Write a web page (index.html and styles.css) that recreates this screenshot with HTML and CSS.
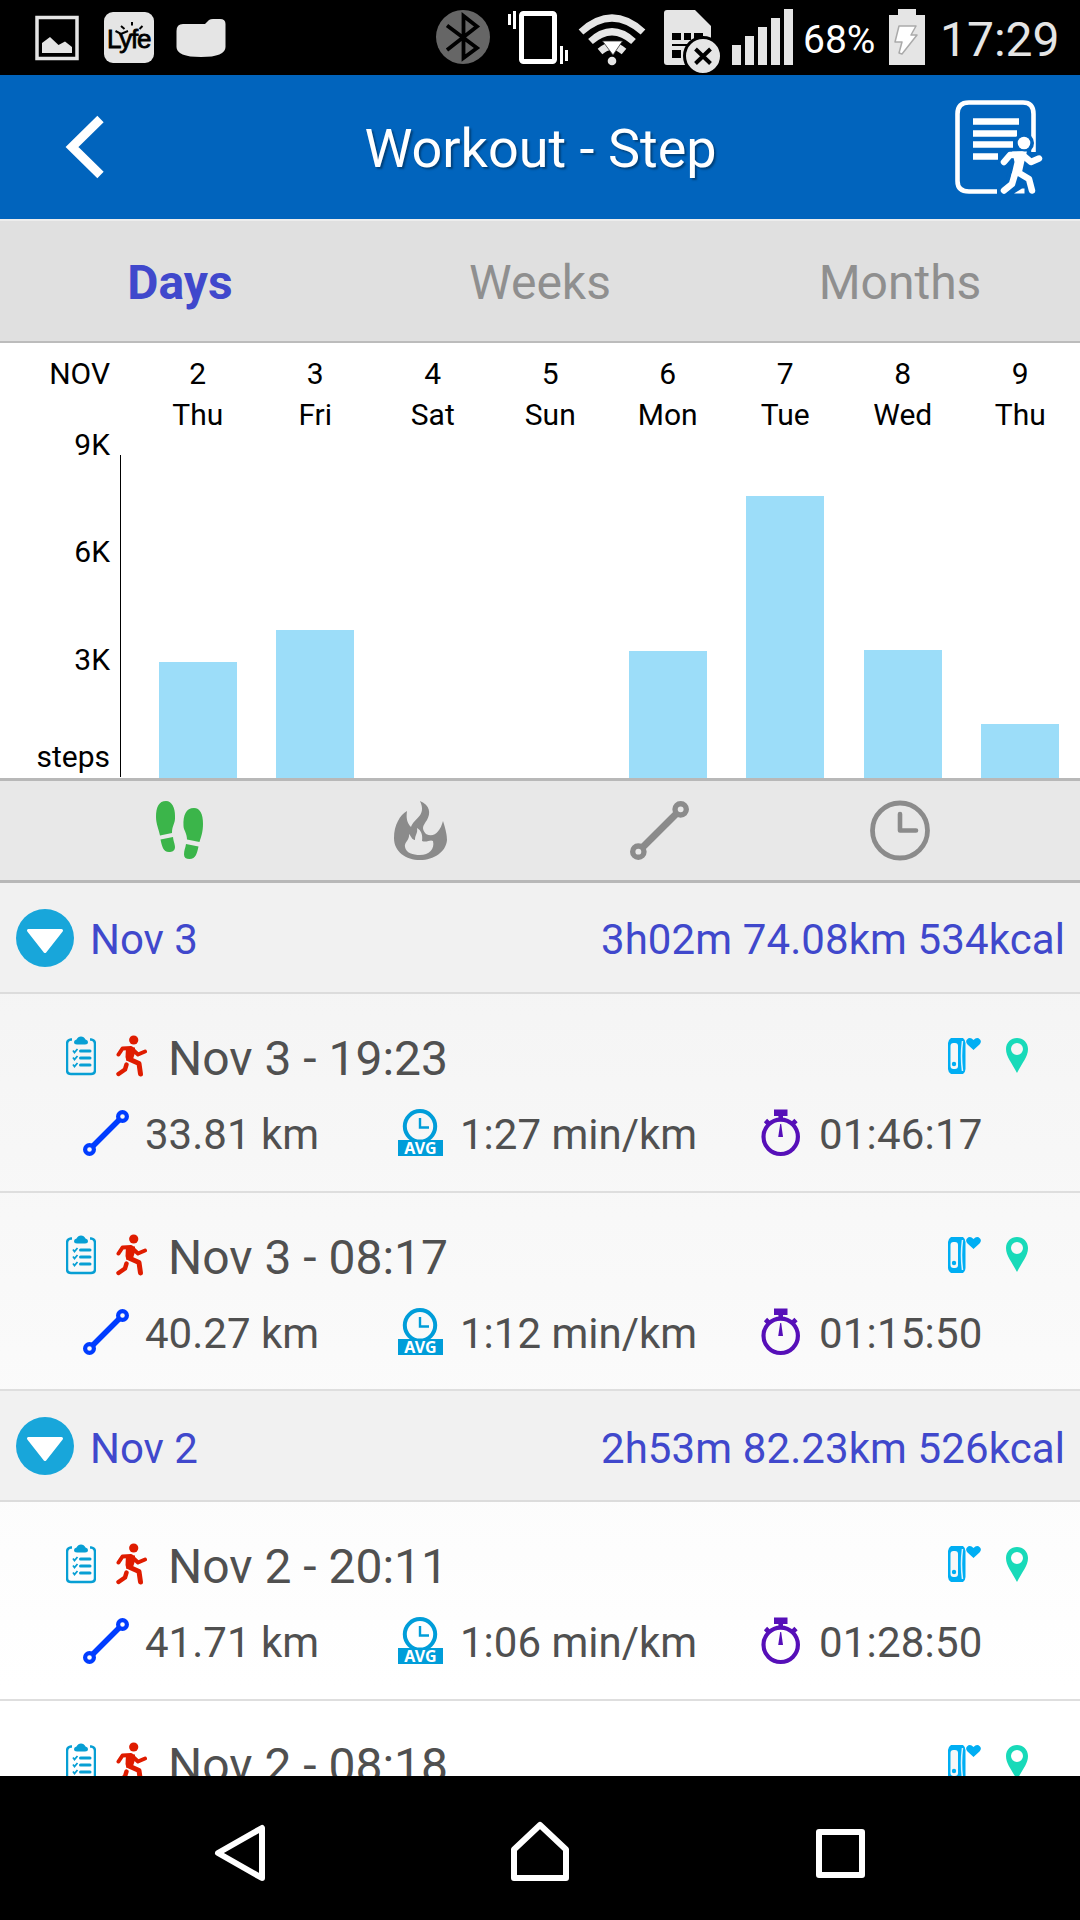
FILE: index.html
```html
<!DOCTYPE html>
<html lang="en">
<head>
    <meta charset="UTF-8">
    <meta name="viewport" content="width=device-width, initial-scale=1.0">
    <title>Workout - Step</title>
    <link rel="stylesheet" href="styles.css">
</head>
<body>
    <!-- shared icons -->
    <svg class="sprite">
        <symbol id="arrow" viewBox="0 0 58 58">
            <circle cx="29" cy="29" r="29" fill="#18a6da"/>
            <path d="M12.500 21.500H45.500L29 42.500Z" fill="#fff" stroke="#fff" stroke-width="3" stroke-linejoin="round"/>
        </symbol>
        <symbol id="clipboard" viewBox="0 0 30 40">
            <path d="M6 3.500H5Q1 4 1 8V34Q1 38 5 38H25Q29 38 29 34V8Q29 4 25 3.500H24" fill="none" stroke="#079fd4" stroke-width="2.500"/>
            <path d="M8 6Q8 4 10.500 3.500Q12 .5 15 .5T19.500 3.500Q22 4 22 6Q22 8.500 19 8.500H11Q8 8.500 8 6Z" fill="#079fd4"/>
            <path d="M14.500 15H24M14.500 22H24M14.500 29H24" stroke="#079fd4" stroke-width="3" stroke-linecap="round"/>
            <path d="M7 14.500L8.500 16.500L11.500 13M7 21.500L8.500 23.500L11.500 20M7 28.500L8.500 30.500L11.500 27" fill="none" stroke="#079fd4" stroke-width="1.800"/>
        </symbol>
        <symbol id="runner" viewBox="0 0 32 42">
            <circle cx="17.700" cy="5" r="4.600" fill="#df1c00"/>
            <path d="M2.500 19.500L6.500 13.500L15 13L22 19.500L29 16.500" fill="none" stroke="#df1c00" stroke-width="4" stroke-linecap="round" stroke-linejoin="round"/>
            <path d="M10 12L19 12.500L19 18L17 24L10.500 26L9.500 22Z" fill="#df1c00"/>
            <path d="M13 24L23 28.500L24.500 39" fill="none" stroke="#df1c00" stroke-width="5" stroke-linecap="round" stroke-linejoin="round"/>
            <path d="M10.500 29.500L9 34.500L2.500 39" fill="none" stroke="#df1c00" stroke-width="4.400" stroke-linecap="round" stroke-linejoin="round"/>
        </symbol>
        <symbol id="route" viewBox="0 0 46 46">
            <path d="M9.500 36.500L36.500 9.500" stroke="currentColor" stroke-width="5.400"/>
            <circle cx="6.500" cy="39.500" r="4.400" fill="none" stroke="currentColor" stroke-width="4.200"/>
            <circle cx="39.500" cy="6.500" r="4.400" fill="none" stroke="currentColor" stroke-width="4.200"/>
        </symbol>
        <symbol id="avg" viewBox="0 0 46 48">
            <circle cx="22" cy="17.300" r="15.200" fill="none" stroke="#009dd9" stroke-width="4"/>
            <path d="M22 9V18.500H31" fill="none" stroke="#009dd9" stroke-width="2.400"/>
            <path d="M0 31H45V47H0Z" fill="#009dd9"/>
            <text x="22.500" y="45" class="avg-text">AVG</text>
        </symbol>
        <symbol id="stopwatch" viewBox="0 0 40 48">
            <path d="M13 .5H26.500V7H13Z" fill="#560fb8"/>
            <path d="M19.700 5V11M4.500 11.500L8 15M35 11.500L31.500 15" stroke="#560fb8" stroke-width="4.600"/>
            <circle cx="19.700" cy="27.800" r="17.200" fill="none" stroke="#560fb8" stroke-width="4.200"/>
            <path d="M19.200 15H20.200L22 28H17.200Z" fill="#560fb8"/>
        </symbol>
        <symbol id="band" viewBox="0 0 34 36">
            <path d="M3 0H15Q17.500 2 17.500 5V31Q17.500 34 15 36H3Q0 34 0 31V5Q0 2 3 0Z" fill="#00aef3"/>
            <rect x="2.500" y="5" width="7.500" height="26" rx="3" fill="#f7f7f7"/>
            <circle cx="6" cy="26" r="2.200" fill="#00aef3"/>
            <path d="M14.500 3Q12.500 18 14.500 33" fill="none" stroke="#d9f3fd" stroke-width="1.500"/>
            <path d="M25.500 12L19.500 6.500Q17 3.500 19 1.500Q22-1.500 25.500 2Q29-1.500 32 1.500Q34 3.500 31.500 6.500Z" fill="#00aef3"/>
        </symbol>
        <symbol id="pin" viewBox="0 0 22 35">
            <path fill-rule="evenodd" d="M11 0C17 0 22 4.500 22 11C22 19 16 25 11 35C6 25 0 19 0 11C0 4.500 5 0 11 0ZM11 5A6 6 0 1 0 11 17A6 6 0 1 0 11 5Z" fill="#18dab9"/>
        </symbol>
    </svg>

    <div class="status-bar">
        <div class="status-left">
            <svg width="69" height="75" viewBox="35 0 69 75">
                <path d="M37 17.500H77V58.500H37Z" fill="none" stroke="#e5e5e5" stroke-width="3.500"/>
                <path d="M42 53V43L50 37L58.500 45L65 41.500L72 47V53Z" fill="#e5e5e5"/>
            </svg>
            <svg width="72" height="75" viewBox="104 0 72 75">
                <rect x="104" y="12" width="50" height="51" rx="9" fill="#e5e5e5"/>
                <text x="107" y="48" class="lyfe-text">Lyfe</text>
                <path d="M121 26L124.500 29M132 22V25.500M142.500 26L139.500 29M115.500 31L121 34L128 31" fill="none" stroke="#000" stroke-width="2"/>
            </svg>
            <svg width="50" height="75" viewBox="176 0 50 75">
                <path d="M183 24H205L209 20Q210.500 19 213 19H220Q225.500 19 225.500 24V47Q225.500 57 201 57Q176.500 57 176.500 47V31Q176.500 24 183 24Z" fill="#e5e5e5"/>
            </svg>
        </div>
        <div class="status-right">
            <svg width="70" height="75" viewBox="436 0 70 75">
                <circle cx="463" cy="37" r="27" fill="#666"/>
                <path d="M447 25.500L477 48L463.500 58V16L477 26.500L447 50" fill="none" stroke="#000" stroke-width="3.800"/>
            </svg>
            <svg width="72" height="75" viewBox="506 0 72 75">
                <rect x="521.500" y="13.500" width="33" height="48" rx="2" fill="none" stroke="#fff" stroke-width="5"/>
                <path d="M509.500 14V25M514.500 11V29M561.500 46V64M566.500 50V61" stroke="#fff" stroke-width="3"/>
            </svg>
            <svg width="80" height="75" viewBox="578 0 80 75">
                <path d="M581 32Q612 4 643 32M590.500 41.500Q612 22 633.500 41.500" fill="none" stroke="#e5e5e5" stroke-width="7"/>
                <path d="M600 51.500Q612 41 624 51.500" fill="none" stroke="#e5e5e5" stroke-width="7"/>
                <path d="M602.500 41H622.500L613 55Z" fill="#fff" stroke="#333" stroke-width=".8"/>
                <circle cx="612" cy="61" r="4.300" fill="#e5e5e5"/>
            </svg>
            <svg width="68" height="75" viewBox="658 0 68 75">
                <path d="M667 10H695L711 26V65H667Q664 65 664 62V13Q664 10 667 10Z" fill="#e5e5e5"/>
                <path d="M672 33H681V40H672ZM684 33H691V40H684ZM694 33H703V40H694ZM672 44H700V46H672ZM672 50H681V58H672ZM684 50H691V58H684Z" fill="#000"/>
                <circle cx="703" cy="56" r="18.500" fill="#e5e5e5" stroke="#000" stroke-width="3"/>
                <path d="M695.500 49L710.500 63.500M710.500 49L695.500 63.500" stroke="#000" stroke-width="4"/>
            </svg>
            <svg width="78" height="75" viewBox="726 0 78 75">
                <path d="M732 45H741V65H732ZM745 36H754V65H745ZM758 27H767V65H758ZM771 18H780V65H771ZM784 9H793V65H784Z" fill="#e5e5e5"/>
            </svg>
            <span class="battery-text">68%</span>
            <svg width="36" height="75" viewBox="889 0 36 75">
                <path d="M898 9H916V15H925V65H889V15H898Z" fill="#e5e5e5"/>
                <path d="M899 26H916L911 35H917L902 54L899 53L902 42H895Z" fill="#fff" stroke="#aaa" stroke-width="1.500" stroke-linejoin="round"/>
            </svg>
            <span class="clock">17:29</span>
        </div>
    </div>

    <div class="header">
        <svg class="back" width="40" height="64" viewBox="0 0 40 64">
            <path d="M35.500 4L7 32L35.500 60" fill="none" stroke="#fff" stroke-width="9"/>
        </svg>
        <h1>Workout - Step</h1>
        <svg class="log" width="90" height="96" viewBox="0 0 90 96">
            <path d="M42 91.500H14Q2.500 91.500 2.500 81V14Q2.500 2.500 14 2.500H68Q78.500 2.500 78.500 14V52" fill="none" stroke="#fff" stroke-width="4.600"/>
            <path d="M18 21.500H64M18 33.500H62M18 44.500H58M18 56.500H43" stroke="#fff" stroke-width="6.400"/>
            <g fill="none" stroke="#0164bd" stroke-width="13" stroke-linecap="round" stroke-linejoin="round">
                <path d="M49 62L55 55L67 54.500L76 62L84 58.500M63 57L60 72L68 75L74 80L76 91M59 74L57 83L49 91"/>
            </g>
            <circle cx="69" cy="43" r="10" fill="#0164bd"/>
            <path d="M59 93.500L67 88.500H69.500V93.500Z" fill="#fff"/>
            <g fill="none" stroke="#fff" stroke-width="6.500" stroke-linecap="round" stroke-linejoin="round">
                <path d="M49 62L55 55L67 54.500L76 62L84 58.500M64 73L74 79L77 90.500M60 74L57 84L49 90.500"/>
            </g>
            <path d="M59 53H70L67.500 63L65.500 72L58 75L61 62Z" fill="#fff" stroke="#fff" stroke-width="3"/>
            <circle cx="69" cy="43" r="6.300" fill="#fff"/>
        </svg>
    </div>

    <div class="tabs">
        <div class="tab active">Days</div>
        <div class="tab">Weeks</div>
        <div class="tab">Months</div>
    </div>

    <div class="chart">
        <div class="scale">
            <span>NOV</span>
            <div class="ticks">
                <span>9K</span>
                <span>6K</span>
                <span>3K</span>
                <span class="unit">steps</span>
            </div>
        </div>
        <div class="axis"></div>
        <div class="days">
            <div class="day"><span>2</span><span>Thu</span><div class="bar" style="height: 116px"></div></div>
            <div class="day"><span>3</span><span>Fri</span><div class="bar" style="height: 148px"></div></div>
            <div class="day"><span>4</span><span>Sat</span></div>
            <div class="day"><span>5</span><span>Sun</span></div>
            <div class="day"><span>6</span><span>Mon</span><div class="bar" style="height: 127px"></div></div>
            <div class="day"><span>7</span><span>Tue</span><div class="bar" style="height: 282px"></div></div>
            <div class="day"><span>8</span><span>Wed</span><div class="bar" style="height: 128px"></div></div>
            <div class="day"><span>9</span><span>Thu</span><div class="bar" style="height: 54px"></div></div>
        </div>
    </div>

    <div class="metrics">
        <svg width="60" height="62" viewBox="0 0 60 62">
            <g fill="#3bb54a">
                <path d="M16 1C22 1 25 8 25 16C25.500 24 22 25 22 33L10 35.500C9 30 6 24 6 17C6 7 9 1 16 1Z"/>
                <path d="M10.500 39.500L23 37C23.500 42 25 44 25 47C25 51 22 52 19 52C13 52 12 46 10.500 39.500Z"/>
                <path d="M44 8C50 8 53 14 53 24C53 32 51 37 49.500 42L37 39.500C37 33 33.500 30 33.500 26C33 15 36 8 44 8Z"/>
                <path d="M36 44L48.500 46.500C47 53 46 59 39.500 59C36 59 34 57.500 34 54.500C34 50 35.500 48 36 44Z"/>
            </g>
        </svg>
        <svg width="60" height="62" viewBox="0 0 60 62">
            <path fill-rule="evenodd" d="M30 1C40 5 41 13 37 20C33 26 31 28 36 34C44 38 50 32 53 21C56 30 57 36 57 40C56 52 44 60 30 60C16 60 4 52 4 38C4 25 10 15 17 11C16 18 17 23 21 27C24 18 37 16 30 1ZM27 28C28 34 25 34 25 40C22 40 21 36 19 34C20 40 14 42 15 47C16 53 23 55 30 55C39 55 45 49 43 41C40 39 37 43 32 41C33 35 31 30 27 28Z" fill="#8b8b8b"/>
        </svg>
        <svg class="grey" width="60" height="62" viewBox="0 0 60 62"><use href="#route" x="0" y="1" width="59" height="59"/></svg>
        <svg width="60" height="62" viewBox="0 0 60 62">
            <circle cx="30" cy="30.500" r="27.500" fill="none" stroke="#8b8b8b" stroke-width="4.800"/>
            <path d="M30 14V30.500H46" fill="none" stroke="#8b8b8b" stroke-width="4.600" stroke-linecap="round" stroke-linejoin="round"/>
        </svg>
    </div>

    <div class="list">
        <div class="group">
            <svg width="58" height="58"><use href="#arrow"/></svg>
            <span>Nov 3</span>
            <span class="total">3h02m 74.08km 534kcal</span>
        </div>
        <div class="item">
            <div class="top">
                <svg width="30" height="40"><use href="#clipboard"/></svg>
                <svg class="run" width="32" height="42"><use href="#runner"/></svg>
                <span>Nov 3 - 19:23</span>
                <svg class="band" width="34" height="36"><use href="#band"/></svg>
                <svg width="22" height="35"><use href="#pin"/></svg>
            </div>
            <div class="stats">
                <div><svg class="blue" width="46" height="46"><use href="#route"/></svg><span>33.81 km</span></div>
                <div><svg width="46" height="48"><use href="#avg"/></svg><span>1:27 min/km</span></div>
                <div><svg width="40" height="48"><use href="#stopwatch"/></svg><span class="time">01:46:17</span></div>
            </div>
        </div>
        <div class="item">
            <div class="top">
                <svg width="30" height="40"><use href="#clipboard"/></svg>
                <svg class="run" width="32" height="42"><use href="#runner"/></svg>
                <span>Nov 3 - 08:17</span>
                <svg class="band" width="34" height="36"><use href="#band"/></svg>
                <svg width="22" height="35"><use href="#pin"/></svg>
            </div>
            <div class="stats">
                <div><svg class="blue" width="46" height="46"><use href="#route"/></svg><span>40.27 km</span></div>
                <div><svg width="46" height="48"><use href="#avg"/></svg><span>1:12 min/km</span></div>
                <div><svg width="40" height="48"><use href="#stopwatch"/></svg><span class="time">01:15:50</span></div>
            </div>
        </div>
        <div class="group">
            <svg width="58" height="58"><use href="#arrow"/></svg>
            <span>Nov 2</span>
            <span class="total">2h53m 82.23km 526kcal</span>
        </div>
        <div class="item">
            <div class="top">
                <svg width="30" height="40"><use href="#clipboard"/></svg>
                <svg class="run" width="32" height="42"><use href="#runner"/></svg>
                <span>Nov 2 - 20:11</span>
                <svg class="band" width="34" height="36"><use href="#band"/></svg>
                <svg width="22" height="35"><use href="#pin"/></svg>
            </div>
            <div class="stats">
                <div><svg class="blue" width="46" height="46"><use href="#route"/></svg><span>41.71 km</span></div>
                <div><svg width="46" height="48"><use href="#avg"/></svg><span>1:06 min/km</span></div>
                <div><svg width="40" height="48"><use href="#stopwatch"/></svg><span class="time">01:28:50</span></div>
            </div>
        </div>
        <div class="item">
            <div class="top">
                <svg width="30" height="40"><use href="#clipboard"/></svg>
                <svg class="run" width="32" height="42"><use href="#runner"/></svg>
                <span>Nov 2 - 08:18</span>
                <svg class="band" width="34" height="36"><use href="#band"/></svg>
                <svg width="22" height="35"><use href="#pin"/></svg>
            </div>
        </div>
    </div>

    <div class="nav-bar">
        <svg width="60" height="64" viewBox="0 0 60 64">
            <path d="M52 7V57L8 32Z" fill="none" stroke="#fff" stroke-width="6" stroke-linejoin="round"/>
        </svg>
        <svg width="60" height="64" viewBox="0 0 60 64">
            <path d="M4 28.500L30 4L56 28.500V57H4Z" fill="none" stroke="#fff" stroke-width="6" stroke-linejoin="round"/>
        </svg>
        <svg width="60" height="64" viewBox="0 0 60 64">
            <path d="M9 11H52V54H9Z" fill="none" stroke="#fff" stroke-width="6" stroke-linejoin="round"/>
        </svg>
    </div>
</body>
</html>
```
FILE: styles.css
```css
* { box-sizing: border-box; }
body {
    margin: 0;
    height: 1920px;
    display: flex;
    flex-direction: column;
    overflow: hidden;
    font-family: Roboto, sans-serif;
    background: #fff;
}
svg { display: block; flex-shrink: 0; }
.sprite { position: absolute; width: 0; height: 0; }
.avg-text {
    font: bold 16px "Noto Sans", sans-serif;
    text-anchor: middle;
    fill: #fff;
}
.lyfe-text {
    font: 26px "Liberation Sans", sans-serif;
    letter-spacing: -1.2px;
    fill: #000;
    stroke: #000;
    stroke-width: 0.8px;
}
.status-bar {
    height: 75px;
    flex-shrink: 0;
    display: flex;
    justify-content: space-between;
    padding: 0 21px 0 35px;
    background: #000;
}
.status-left, .status-right { display: flex; }
.battery-text {
    width: 85px;
    margin-left: -1px;
    margin-right: 1px;
    font-size: 39px;
    line-height: 80px;
    color: #fff;
}
.clock {
    width: 134px;
    padding-left: 15px;
    font-size: 48px;
    line-height: 79px;
    color: #e5e5e5;
}
.header {
    height: 146px;
    flex-shrink: 0;
    display: flex;
    align-items: center;
    justify-content: space-between;
    padding: 0 35px 0 65px;
    background: #0164bd;
    border-bottom: 2px solid #ededed;
}
.header h1 {
    margin: 2px 0 0 21px;
    font-size: 54px;
    font-weight: normal;
    color: #fff;
    text-shadow: 2px 2px 2px rgba(0, 0, 0, 0.35);
}
.log { margin-top: 2px; }
.tabs {
    height: 122px;
    flex-shrink: 0;
    display: flex;
    background: #e0e0e0;
    border-bottom: 2px solid #bcbcbc;
}
.tab {
    flex: 1;
    font-size: 48px;
    line-height: 124px;
    text-align: center;
    color: #8f8f8f;
}
.tab.active { color: #4048cc; font-weight: bold; }
.chart {
    height: 435px;
    flex-shrink: 0;
    display: flex;
    font-size: 30px;
    line-height: 41px;
    color: #000;
}
.scale {
    width: 110px;
    display: flex;
    flex-direction: column;
    padding-top: 10px;
    text-align: right;
}
.ticks {
    display: flex;
    flex-direction: column;
    gap: 66.300px;
    margin-top: 30px;
}
.unit { margin-top: -10px; }
.axis {
    width: 1px;
    margin: 112px 18px 1px 10px;
    background: #000;
}
.days { display: flex; }
.day {
    width: 117.500px;
    display: flex;
    flex-direction: column;
    align-items: center;
    padding-top: 10px;
}
.bar {
    width: 78px;
    margin-top: auto;
    background: #9cddf9;
}
.metrics {
    height: 105px;
    flex-shrink: 0;
    display: flex;
    align-items: center;
    gap: 180px;
    padding-left: 150px;
    background: #e8e8e8;
    border-top: 3px solid #b8b8b8;
    border-bottom: 3px solid #b8b8b8;
}
.grey { color: #8b8b8b; }
.list {
    height: 893px;
    flex-shrink: 0;
    overflow: hidden;
    background: linear-gradient(#f3f3f3, #fff 90%);
}
.group {
    height: 110.670px;
    display: flex;
    align-items: center;
    padding: 1px 15px 0 16px;
    font-size: 42px;
    color: #4048cc;
    background: #f1f1f1;
    border-bottom: 2px solid #dcdcdc;
}
.group span { margin-left: 16px; padding-top: 4px; }
.group .total { margin-left: auto; letter-spacing: 0.1px; }
.item {
    height: 198.900px;
    padding: 36px 52px 0 66px;
    color: #505050;
    border-bottom: 2px solid #dedede;
}
.top {
    height: 52px;
    display: flex;
    align-items: center;
    font-size: 48px;
}
.top span { margin-left: 20px; padding-top: 5px; }
.run { margin-left: 20px; }
.band { margin-left: auto; margin-right: 24px; }
.stats {
    display: grid;
    grid-template-columns: 315px 363px 1fr;
    margin: 27px 0 0 17px;
    font-size: 42px;
}
.stats div {
    height: 48px;
    display: flex;
    align-items: center;
}
.stats span { margin-left: 16px; padding-top: 3px; white-space: nowrap; }
.stats .time { margin-left: 18px; letter-spacing: 0.2px; }
.blue { color: #003cff; }
.nav-bar {
    height: 144px;
    flex-shrink: 0;
    display: flex;
    align-items: center;
    justify-content: center;
    gap: 240px;
    padding-top: 10px;
    background: #000;
}
```
